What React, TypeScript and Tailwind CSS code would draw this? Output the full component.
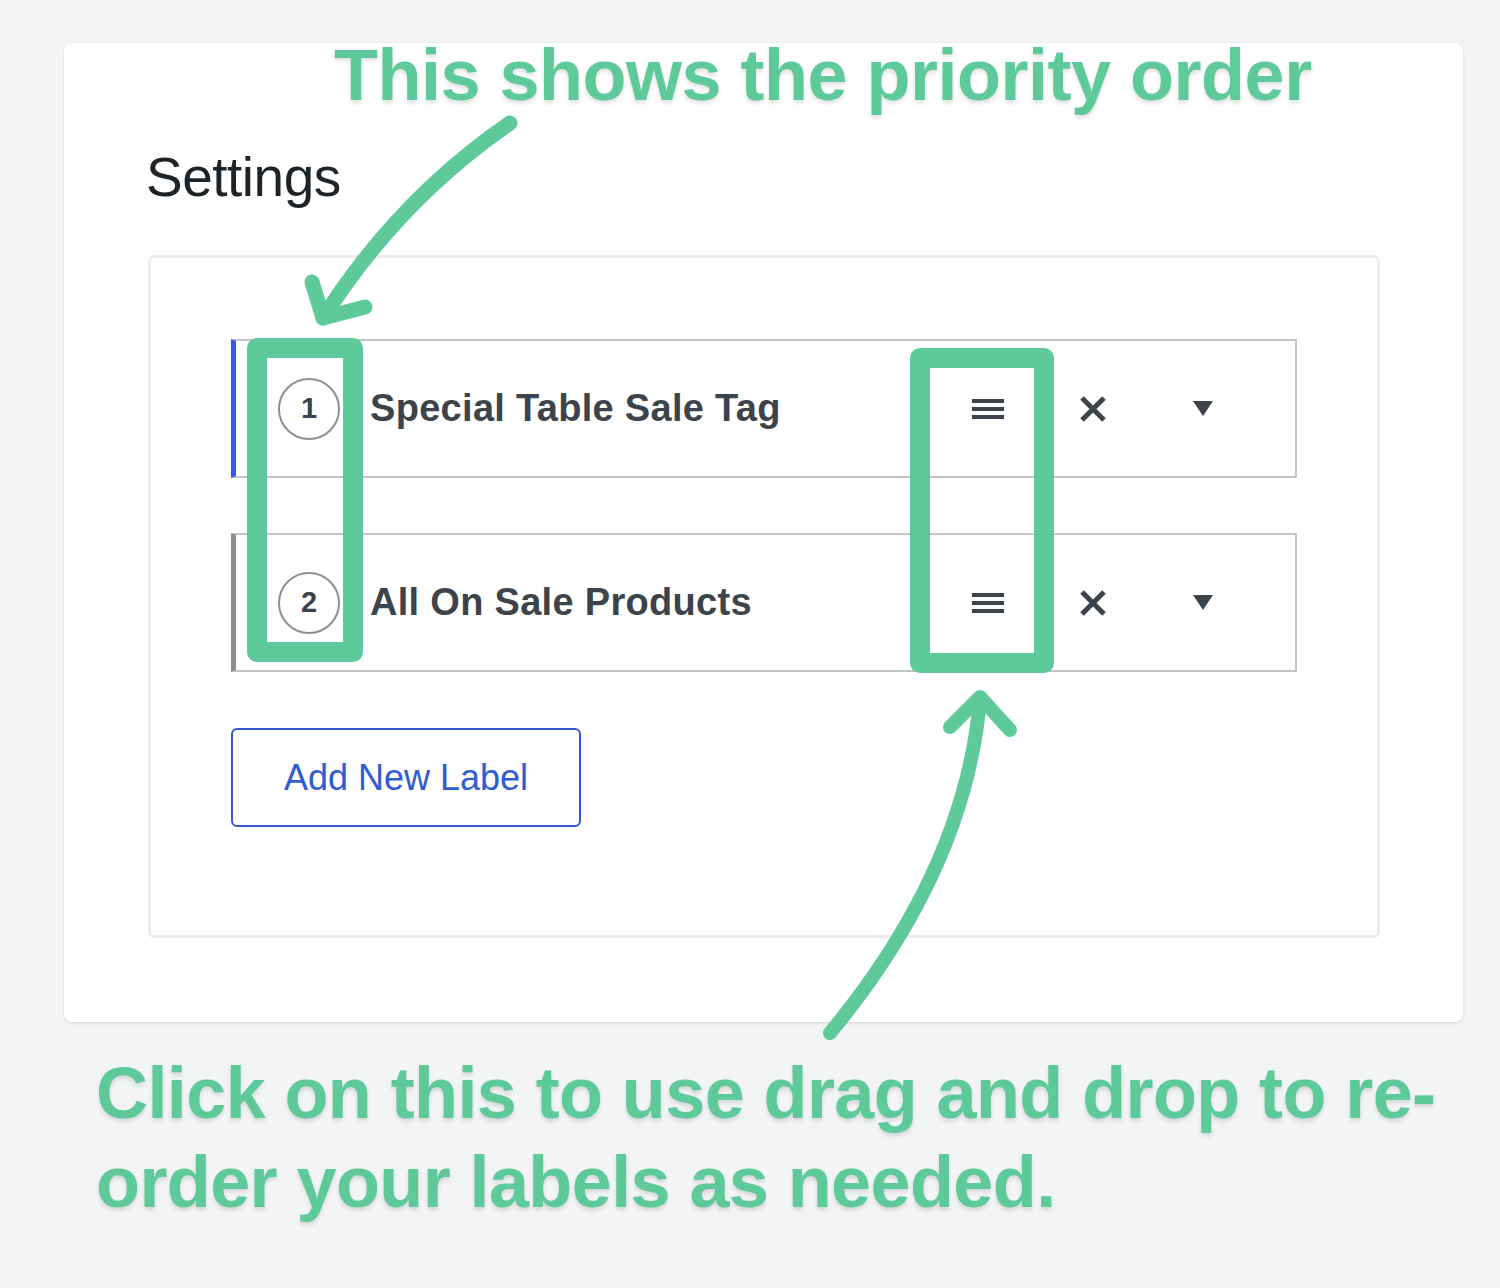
import React from 'react';

const GREEN = '#5ec99b';

interface LabelRow {
  idx: number;
  title: string;
  active: boolean;
}

const ROWS: LabelRow[] = [
  { idx: 1, title: 'Special Table Sale Tag', active: true },
  { idx: 2, title: 'All On Sale Products', active: false },
];

function MenuIcon() {
  return (
    <svg width="32" height="24" viewBox="0 0 32 24" className="shrink-0">
      <rect x="0" y="2" width="32" height="4" fill="#3c434a" />
      <rect x="0" y="10" width="32" height="4" fill="#3c434a" />
      <rect x="0" y="18" width="32" height="4" fill="#3c434a" />
    </svg>
  );
}

function CloseIcon() {
  return (
    <svg width="28" height="28" viewBox="0 0 28 28" className="shrink-0">
      <path d="M3 3 L25 25 M25 3 L3 25" stroke="#3c434a" strokeWidth="5" strokeLinecap="butt" />
    </svg>
  );
}

function CaretIcon() {
  return (
    <svg width="20" height="15" viewBox="0 0 20 15" className="shrink-0">
      <polygon points="0,0 20,0 10,15" fill="#3c434a" />
    </svg>
  );
}

export default function App() {
  return (
    <div className="relative w-[1500px] h-[1288px] overflow-hidden bg-[#f2f4f5] font-['Liberation_Sans',Arial,sans-serif]">
      {/* Screenshot card */}
      <div className="flow-root ml-[64px] mt-[43px] w-[1399px] h-[979px] bg-white rounded-lg shadow-[0_1px_3px_rgba(0,0,0,0.14)]">
        <div className="-mt-[4px] pl-[270px] text-[72px] leading-[72px] font-bold tracking-[-0.5px] whitespace-nowrap text-[#5ec99b] [text-shadow:0_3px_4px_rgba(0,0,0,0.12)]">
          This shows the priority order
        </div>

        <div className="pl-[82px]">
          <h2 className="mt-[39px] text-[55px] leading-[55px] text-[#1d2327] tracking-[-0.5px]">Settings</h2>

          {/* Settings panel */}
          <div className="mt-[50px] ml-[2px] w-[1232px] border-[3px] border-[#ececec] rounded-md px-[80px] pt-[81px] pb-[108px]">
            <div className="flex flex-col gap-[55px]">
              {ROWS.map((row) => (
                <div
                  key={row.idx}
                  className={`h-[139px] flex items-center border-2 border-[#c3c4c7] border-l-[5px] ${
                    row.active ? 'border-l-[#3858e9]' : 'border-l-[#8c8f94]'
                  }`}
                >
                  <span className="ml-[42px] w-[62px] h-[62px] rounded-full border-2 border-[#8c8f94] flex items-center justify-center text-[29px] font-bold text-[#3c434a] shrink-0">
                    {row.idx}
                  </span>
                  <span className="ml-[30px] text-[38px] tracking-[0.3px] font-bold text-[#3c434a] whitespace-nowrap">
                    {row.title}
                  </span>
                  <div className="ml-auto flex items-center pr-[82px]">
                    <MenuIcon />
                    <span className="ml-[75px]">
                      <CloseIcon />
                    </span>
                    <span className="ml-[86px]">
                      <CaretIcon />
                    </span>
                  </div>
                </div>
              ))}
            </div>

            <button className="mt-[56px] w-[350px] h-[99px] border-2 border-[#3358cf] rounded-md text-[36px] text-[#2f5bd3] bg-white">
              Add New Label
            </button>
          </div>
        </div>
      </div>

      {/* Bottom annotation */}
      <p className="mt-[27px] pl-[96px] text-[72px] leading-[89px] font-bold tracking-[-0.6px] text-[#5ec99b] [text-shadow:0_3px_4px_rgba(0,0,0,0.12)]">
        Click on this to use drag and drop to re-
        <br />
        order your labels as needed.
      </p>

      {/* Annotation drawings */}
      <svg className="absolute inset-0 pointer-events-none" width="1500" height="1288" viewBox="0 0 1500 1288">
        <g fill="none" stroke={GREEN} strokeLinecap="round" strokeLinejoin="round">
          <rect x="257" y="348" width="96" height="304" strokeWidth="20" />
          <rect x="920" y="358" width="124" height="305" strokeWidth="20" />
          <path d="M510 123 Q398 200 323 318" strokeWidth="15" />
          <path d="M312 282 L323 318 L365 307" strokeWidth="15" />
          <path d="M830 1033 Q965 870 980 700" strokeWidth="14" />
          <path d="M950 727 L980 697 L1010 730" strokeWidth="14" />
        </g>
      </svg>
    </div>
  );
}
